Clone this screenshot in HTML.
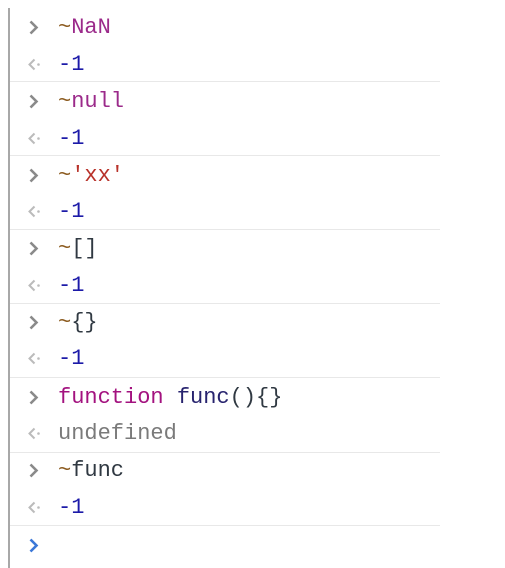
<!DOCTYPE html>
<html><head><meta charset="utf-8"><style>
body{margin:0;width:505px;height:568px;background:#fff;overflow:hidden;position:relative;font-family:"Liberation Mono",monospace;}
.bar{position:absolute;left:8px;top:8px;width:2px;height:560px;background:#a8a8a8;}
.row{position:absolute;left:0;height:37px;line-height:37px;font-size:22px;white-space:pre;}
.t{position:absolute;left:58px;}
.ic{position:absolute;left:26px;top:0;width:20px;height:37px;}
.sep{position:absolute;left:10px;width:430px;height:1px;background:#e8e8e8;}
.til{color:#8b5a1e}.pur{color:#9b2a8a}.blu{color:#1c1aa8}.str{color:#b8322a}.pun{color:#303942}.kw{color:#a3127f}.fn{color:#27236e}.gr{color:#7a7a7a}
</style></head><body>
<div class="bar"></div>
<svg width="0" height="0" style="position:absolute"><defs>
<g id="in"><path d="M4.5 12.5 L10.5 18.5 L4.5 24.5" fill="none" stroke="#8a8a8a" stroke-width="2.6"/></g>
<g id="out"><path d="M8.5 13.5 L3.5 18.5 L8.5 23.5" fill="none" stroke="#bbb" stroke-width="2"/><circle cx="12.5" cy="18.5" r="1.3" fill="#bbb"/></g>
</defs></svg>

<div class="row" style="top:9px"><svg class="ic"><use href="#in"/></svg><span class="t"><span class="til">~</span><span class="pur">NaN</span></span></div>
<div class="row" style="top:46px"><svg class="ic"><use href="#out"/></svg><span class="t blu">-1</span></div>
<div class="sep" style="top:81px"></div>
<div class="row" style="top:83px"><svg class="ic"><use href="#in"/></svg><span class="t"><span class="til">~</span><span class="pur">null</span></span></div>
<div class="row" style="top:120px"><svg class="ic"><use href="#out"/></svg><span class="t blu">-1</span></div>
<div class="sep" style="top:155px"></div>
<div class="row" style="top:157px"><svg class="ic"><use href="#in"/></svg><span class="t"><span class="til">~</span><span class="str">'xx'</span></span></div>
<div class="row" style="top:193px"><svg class="ic"><use href="#out"/></svg><span class="t blu">-1</span></div>
<div class="sep" style="top:229px"></div>
<div class="row" style="top:230px"><svg class="ic"><use href="#in"/></svg><span class="t"><span class="til">~</span><span class="pun">[]</span></span></div>
<div class="row" style="top:267px"><svg class="ic"><use href="#out"/></svg><span class="t blu">-1</span></div>
<div class="sep" style="top:303px"></div>
<div class="row" style="top:304px"><svg class="ic"><use href="#in"/></svg><span class="t"><span class="til">~</span><span class="pun">{}</span></span></div>
<div class="row" style="top:340px"><svg class="ic"><use href="#out"/></svg><span class="t blu">-1</span></div>
<div class="sep" style="top:377px"></div>
<div class="row" style="top:379px"><svg class="ic"><use href="#in"/></svg><span class="t"><span class="kw">function</span> <span class="fn">func</span><span class="pun">(){}</span></span></div>
<div class="row" style="top:415px"><svg class="ic"><use href="#out"/></svg><span class="t gr">undefined</span></div>
<div class="sep" style="top:452px"></div>
<div class="row" style="top:452px"><svg class="ic"><use href="#in"/></svg><span class="t"><span class="til">~</span><span class="pun">func</span></span></div>
<div class="row" style="top:489px"><svg class="ic"><use href="#out"/></svg><span class="t blu">-1</span></div>
<div class="sep" style="top:525px"></div>
<div class="row" style="top:527px"><svg class="ic"><path d="M4.5 12.5 L10.5 18.5 L4.5 24.5" fill="none" stroke="#3b78d8" stroke-width="2.6"/></svg></div>
</body></html>
